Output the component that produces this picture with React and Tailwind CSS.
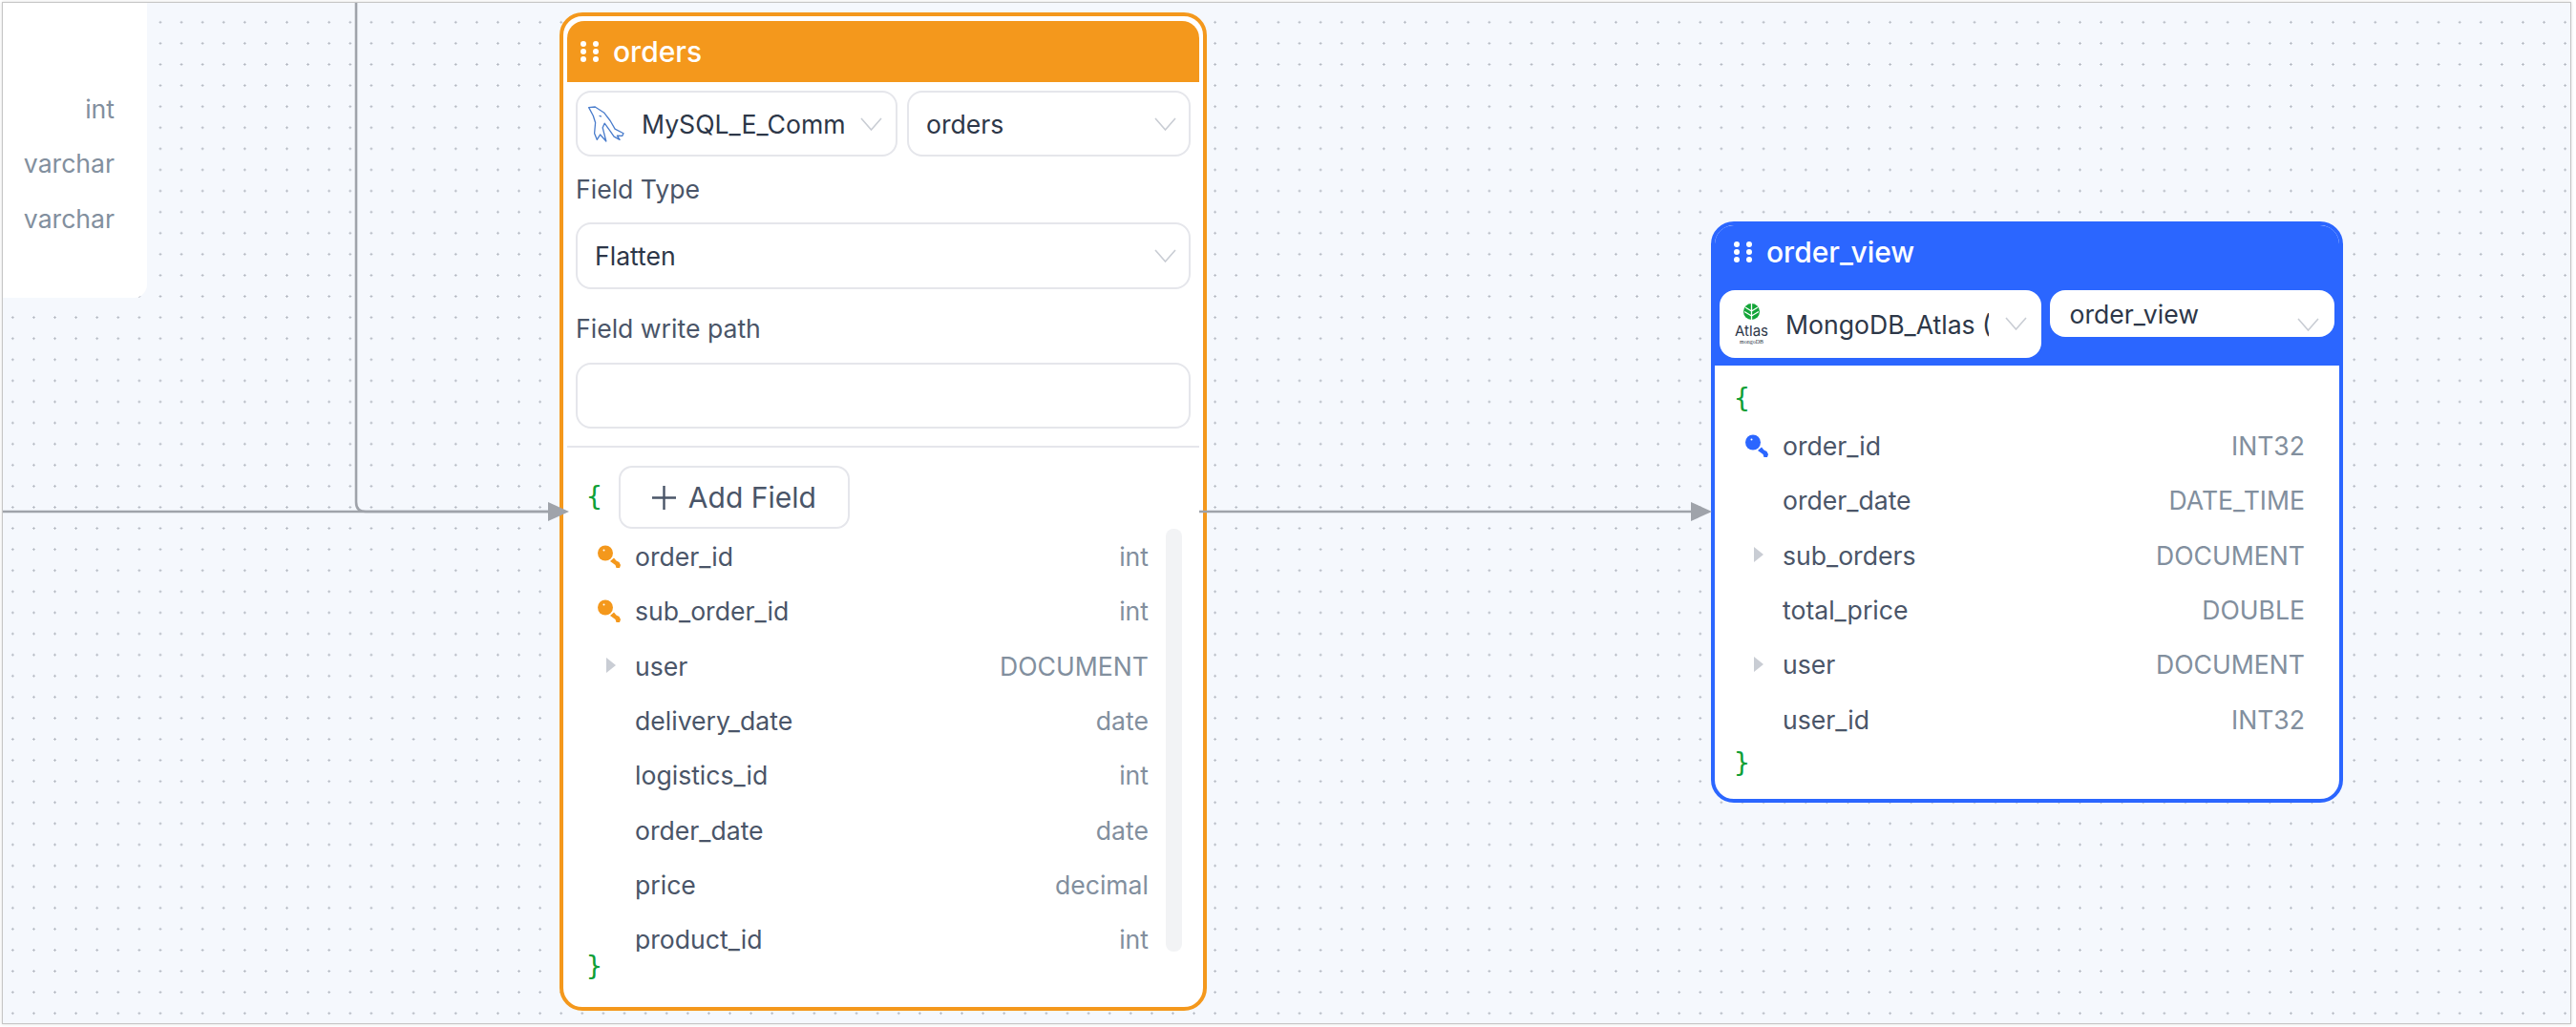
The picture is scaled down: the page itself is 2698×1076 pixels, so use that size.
import React from 'react';

const ordersFields = [
  { name: 'order_id', type: 'int', icon: 'key' },
  { name: 'sub_order_id', type: 'int', icon: 'key' },
  { name: 'user', type: 'DOCUMENT', icon: 'caret' },
  { name: 'delivery_date', type: 'date' },
  { name: 'logistics_id', type: 'int' },
  { name: 'order_date', type: 'date' },
  { name: 'price', type: 'decimal' },
  { name: 'product_id', type: 'int' },
];

const viewFields = [
  { name: 'order_id', type: 'INT32', icon: 'key' },
  { name: 'order_date', type: 'DATE_TIME' },
  { name: 'sub_orders', type: 'DOCUMENT', icon: 'caret' },
  { name: 'total_price', type: 'DOUBLE' },
  { name: 'user', type: 'DOCUMENT', icon: 'caret' },
  { name: 'user_id', type: 'INT32' },
];

function Grip() {
  return (
    <svg width="19" height="22" viewBox="0 0 19 22" fill="#fff" className="shrink-0">
      <circle cx="3" cy="3" r="3" />
      <circle cx="16" cy="3" r="3" />
      <circle cx="3" cy="11" r="3" />
      <circle cx="16" cy="11" r="3" />
      <circle cx="3" cy="19" r="3" />
      <circle cx="16" cy="19" r="3" />
    </svg>
  );
}

function Chevron({ className = '' }) {
  return (
    <svg width="23" height="14" viewBox="0 0 23 14" fill="none" stroke="#c9cdd4" strokeWidth="1.6" className={`shrink-0 ${className}`}>
      <path d="M1 1 L11.5 13 L22 1" />
    </svg>
  );
}

function Key({ color }) {
  return (
    <svg width="24" height="24" viewBox="0 0 24 24" className="shrink-0">
      <circle cx="8" cy="8.5" r="8" fill={color} />
      <path d="M13 17 L17 13.5 L19.5 16.5 L22.5 18 L24 21 L23 24 L19.5 24 L18.5 21 Z" fill={color} />
      <circle cx="6.5" cy="5.5" r="1" fill="#fff" />
    </svg>
  );
}

function Caret() {
  return (
    <svg width="10" height="16" viewBox="0 0 10 16" className="ml-[9px] shrink-0">
      <path d="M0 0 L10 8 L0 16 Z" fill="#c9cdd4" />
    </svg>
  );
}

function Brace({ children }) {
  return <span className="font-['DejaVu_Sans_Mono',monospace] text-[28px] leading-none text-[#0e9f36]">{children}</span>;
}

function FieldRow({ field, color }) {
  return (
    <div className="flex h-[57.4px] shrink-0 items-center text-[26.6px]">
      <span className="flex w-[39px] shrink-0 items-center">
        {field.icon === 'key' && <Key color={color} />}
        {field.icon === 'caret' && <Caret />}
      </span>
      <span className="flex-1 pt-[2px] text-[#4a5568]">{field.name}</span>
      <span className="pt-[2px] text-[#828f9e]">{field.type}</span>
    </div>
  );
}

function MysqlLogo() {
  return (
    <svg width="39" height="39" viewBox="78 60 118 118" fill="none" stroke="#4a7dcc" strokeWidth="4" strokeLinejoin="round" className="shrink-0">
      <path d="M80 68 L100 66 L128 84 L148 110 L163 136 L190 150 L186 158 L170 157 L178 170 L160 160 L148 143 L130 118 L124 132 L135 175 L116 154 L106 170 L98 150 L101 116 L94 94 Z" />
      <path d="M113 94 L120 97" />
    </svg>
  );
}

function AtlasLogo() {
  return (
    <span className="flex w-[35px] shrink-0 flex-col items-center">
      <svg width="17" height="17" viewBox="0 0 17 17">
        <circle cx="8.5" cy="8.5" r="8.5" fill="#13a538" />
        <path d="M8.5 0 V17 M8.5 8 L2 4 M8.5 8 L15 4 M8.5 13 L1 8.5 M8.5 13 L16 8.5" stroke="#fff" strokeWidth="1.3" fill="none" />
      </svg>
      <span className="mt-[4px] text-[15px] leading-[15px] text-[#2d3748]">Atlas</span>
      <span className="font-['Liberation_Serif',serif] text-[6px] leading-[8px] text-[#2d3748]">mongoDB</span>
    </span>
  );
}

function Select({ children, className = '' }) {
  return (
    <div className={`flex items-center overflow-hidden rounded-[16px] bg-white text-[26.6px] text-[#2d3748] ${className}`}>
      {children}
    </div>
  );
}

function OrdersNode() {
  return (
    <div className="absolute left-[583px] top-[10px] flex h-[1046px] w-[678px] flex-col rounded-[24px] border-4 border-[#f4981c] bg-white px-[4px] pt-[5px]">
      <div className="flex h-[64px] shrink-0 items-center rounded-t-[18px] bg-[#f4981c] pl-[14px] text-[30px] font-medium text-white">
        <Grip />
        <span className="ml-[15px] pt-[1px]">orders</span>
      </div>

      <div className="flex flex-col px-[9px]">
        <div className="mt-[9px] flex gap-[10px]">
          <Select className="h-[69px] w-[337px] border-2 border-[#e5e6eb] pl-[11px] pr-[14px]">
            <MysqlLogo />
            <span className="ml-[17px] w-[214px] overflow-hidden whitespace-nowrap pt-[2px]">MySQL_E_Commerce</span>
            <Chevron className="ml-auto" />
          </Select>
          <Select className="h-[69px] w-[297px] border-2 border-[#e5e6eb] pl-[18px] pr-[13px]">
            <span className="pt-[2px]">orders</span>
            <Chevron className="ml-auto" />
          </Select>
        </div>

        <label className="flex h-[69px] items-center text-[26.6px] text-[#4a5568]">Field Type</label>
        <Select className="h-[70px] border-2 border-[#e5e6eb] pl-[18px] pr-[13px]">
          <span className="pt-[2px]">Flatten</span>
          <Chevron className="ml-auto" />
        </Select>

        <label className="flex h-[77px] items-center pt-[7px] text-[26.6px] text-[#4a5568]">Field write path</label>
        <div className="h-[69px] rounded-[16px] border-2 border-[#e5e6eb]" />
      </div>

      <div className="mt-[18px] h-[2px] shrink-0 bg-[#e5e6eb]" />

      <div className="mt-[19px] flex h-[66px] shrink-0 items-center pl-[20px]">
        <Brace>{'{'}</Brace>
        <button className="ml-[17px] flex h-full w-[242px] items-center justify-center gap-[13px] rounded-[14px] border-2 border-[#e5e6eb] text-[30px] text-[#4a5568]">
          <svg width="25" height="25" viewBox="0 0 25 25" stroke="#4a5568" strokeWidth="2.4">
            <path d="M12.5 0 V25 M0 12.5 H25" />
          </svg>
          Add Field
        </button>
      </div>

      <div className="flex h-[443px] shrink-0 pl-[32px] pr-[18px]">
        <div className="flex-1 overflow-hidden pr-[18px]">
          {ordersFields.map((field) => (
            <FieldRow key={field.name} field={field} color="#f4981c" />
          ))}
        </div>
        <div className="w-[17px] rounded-[8px] bg-[#f2f3f5]" />
      </div>

      <div className="pl-[20px] pt-[2px]">
        <Brace>{'}'}</Brace>
      </div>
    </div>
  );
}

function ViewNode() {
  return (
    <div className="absolute left-[1789px] top-[229px] flex h-[609px] w-[662px] flex-col overflow-hidden rounded-[24px] border-4 border-[#2b66ff] bg-white">
      <div className="h-[147px] shrink-0 bg-[#2b66ff] px-[5px]">
        <div className="flex h-[56px] items-center pl-[15px] text-[30px] font-medium text-white">
          <Grip />
          <span className="ml-[15px] pt-[1px]">order_view</span>
        </div>
        <div className="mt-[12px] flex items-start gap-[9px]">
          <Select className="h-[71px] w-[338px] pl-[16px] pr-[15px]">
            <AtlasLogo />
            <span className="ml-[18px] w-[213px] overflow-hidden whitespace-nowrap pt-[2px]">MongoDB_Atlas (MongoDB)</span>
            <Chevron className="ml-auto mb-[2px]" />
          </Select>
          <div className="relative flex h-[49px] w-[298px] items-center rounded-[16px] bg-white pl-[20px] pt-[2px] text-[26.6px] text-[#2d3748]">
            <span>order_view</span>
            <Chevron className="absolute right-[16px] top-[29px]" />
          </div>
        </div>
      </div>

      <div className="flex flex-1 flex-col pl-[32px] pr-[36px]">
        <div className="-ml-[12px] flex h-[55px] shrink-0 items-center pt-[14px]">
          <Brace>{'{'}</Brace>
        </div>
        {viewFields.map((field) => (
          <FieldRow key={field.name} field={field} color="#2b66ff" />
        ))}
        <div className="-ml-[12px] pt-[4px]">
          <Brace>{'}'}</Brace>
        </div>
      </div>
    </div>
  );
}

function Edges() {
  return (
    <svg width="2689" height="1069" className="pointer-events-none absolute left-0 top-0" fill="none" stroke="#9fa3aa" strokeWidth="2.6">
      <path d="M370 0 V523 Q370 533 380 533 H575" />
      <path d="M0 533 H575" />
      <path d="M1253 533 H1775" />
      <path d="M571 523 L593 533 L571 543 Z" fill="#9fa3aa" stroke="none" />
      <path d="M1768 523 L1790 533 L1768 543 Z" fill="#9fa3aa" stroke="none" />
    </svg>
  );
}

export default function App() {
  return (
    <div className="h-[1076px] w-[2698px] overflow-hidden bg-white pl-[3px] pt-[3px] font-['Inter',sans-serif]">
      <div className="relative h-[1069px] w-[2689px] overflow-hidden bg-[#f5f8fd] bg-[radial-gradient(#b6bbc4_1.1px,transparent_1.3px)] bg-[size:22.1px_22.1px] bg-[position:-0.75px_9.25px] shadow-[0_0_0_1px_#c6c6c6,0_0_3px_1px_rgba(0,0,0,0.15)]">
        <div className="absolute left-0 top-0 h-[309px] w-[151px] rounded-br-[14px] bg-white pr-[34px] pt-[83px] text-right text-[26.6px] text-[#828f9e]">
          <div className="flex h-[57.5px] items-center justify-end">int</div>
          <div className="flex h-[57.5px] items-center justify-end">varchar</div>
          <div className="flex h-[57.5px] items-center justify-end">varchar</div>
        </div>
        <OrdersNode />
        <ViewNode />
        <Edges />
      </div>
    </div>
  );
}
